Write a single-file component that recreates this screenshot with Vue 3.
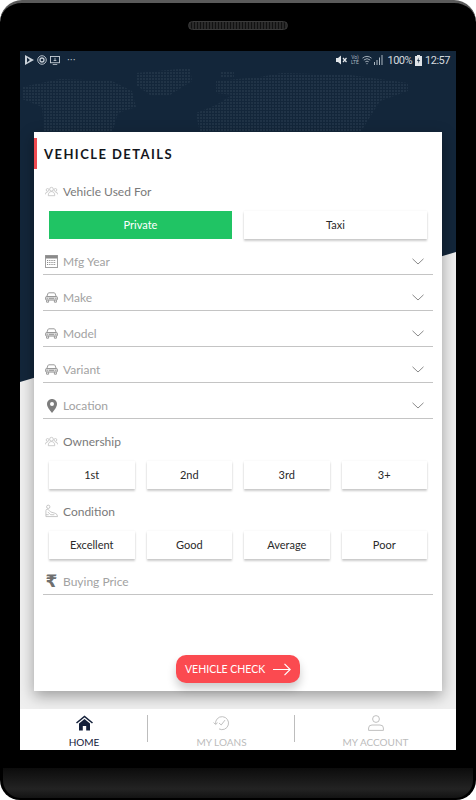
<template>
  <div class="device">
    <div class="bezel-top">
      <div class="speaker"></div>
    </div>

    <div class="screen">
      <div class="backdrop">
        <svg class="world" width="436" height="340" viewBox="0 0 436 340">
          <defs>
            <pattern id="dots" width="3" height="3" patternUnits="userSpaceOnUse">
              <rect width="2" height="2" fill="#34475a" />
            </pattern>
          </defs>
          <g fill="url(#dots)" opacity="0.4">
            <path d="M2 36 L40 28 L92 30 L112 40 L116 56 L98 62 L92 82 L60 82 L24 80 L22 56 L2 48 Z" />
            <path d="M116 22 L170 17 L172 30 L150 44 L130 44 L116 34 Z" />
            <path d="M196 30 L240 26 L262 22 L330 24 L388 32 L388 40 L360 50 L350 66 L340 82 L180 82 L176 62 L196 54 L212 44 L196 42 Z" />
            <path d="M200 20 L214 20 L214 27 L200 27 Z" />
          </g>
        </svg>
      </div>

      <div class="status-bar">
        <div class="status-left">
          <svg width="9" height="10" viewBox="0 0 9 10"><path d="M0 0 L9 5 L0 10 Z M2 2.5 V7.5 L5 5 Z" fill="#c8d0d8" fill-rule="evenodd" /></svg>
          <svg width="10" height="10" viewBox="0 0 11 11" fill="none" stroke="#c8d0d8"><circle cx="5.5" cy="5.5" r="4.7" /><circle cx="5.5" cy="5.5" r="2.2" stroke-width="1.4" /></svg>
          <svg width="10" height="9" viewBox="0 0 11 10" fill="none" stroke="#c8d0d8"><rect x="0.5" y="0.5" width="10" height="7" /><path d="M3 9.5 H8 M5.5 2 V5 M4 5 H7" stroke-width="0.9" /></svg>
          <span class="status-dots">···</span>
        </div>
        <div class="status-right">
          <svg width="11" height="10" viewBox="0 0 11 10"><path d="M0 3 H2 L5 0.5 V9.5 L2 7 H0 Z" fill="#e2e6ea" /><path d="M7 3 L10.5 7 M10.5 3 L7 7" stroke="#e2e6ea" stroke-width="1.2" /></svg>
          <span class="volte">Vo)<br />LTE</span>
          <svg width="10" height="10" viewBox="0 0 11 10" fill="none" stroke="#aeb8c2"><path d="M0.5 3 Q5.5 -1 10.5 3 M2 5 Q5.5 2 9 5 M3.6 7 Q5.5 5.5 7.4 7" /><path d="M5.5 10 L4.5 8.5 H6.5 Z" fill="#aeb8c2" stroke="none" /></svg>
          <svg class="signal" width="9" height="10" viewBox="0 0 9 10" fill="#aeb8c2"><rect x="0" y="7" width="1" height="3" /><rect x="2.5" y="5" width="1" height="5" /><rect x="5" y="2.5" width="1" height="7.5" /><rect x="7.5" y="0" width="1" height="10" /></svg>
          <span class="status-text">100%</span>
          <svg width="7" height="11" viewBox="0 0 7 11"><path d="M2 0 H5 V1 H7 V11 H0 V1 H2 Z" fill="#dfe3e8" /><path d="M3.8 2.5 L2 6 H3.4 L3 8.5 L5 5 H3.6 Z" fill="#1c3044" /></svg>
          <span class="status-text">12:57</span>
        </div>
      </div>

      <main class="content">
        <section class="card">
          <h1 class="card-title">VEHICLE DETAILS</h1>

          <div class="label-row">
            <svg class="icon" width="14" height="11" viewBox="0 0 14 11" fill="none" stroke="#bdbdbd" stroke-width="0.8">
              <circle cx="7" cy="3" r="2" /><path d="M3.5 10 Q3.5 5.6 7 5.6 Q10.5 5.6 10.5 10 Z" />
              <circle cx="2.8" cy="3.8" r="1.5" /><path d="M0.4 8.6 Q0.4 6 2.9 6" />
              <circle cx="11.2" cy="3.8" r="1.5" /><path d="M13.6 8.6 Q13.6 6 11.1 6" />
            </svg>
            <span class="label">Vehicle Used For</span>
          </div>
          <div class="options two">
            <div class="option active">Private</div>
            <div class="option">Taxi</div>
          </div>

          <div v-for="f in selectFields" :key="f.label" class="field">
            <svg v-if="f.icon === 'calendar'" class="icon" width="13" height="13" viewBox="0 0 13 13">
              <rect x="0.5" y="0.5" width="12" height="12" fill="#fff" stroke="#a0a0a0" />
              <rect x="0.5" y="0.5" width="12" height="3" fill="#8a8a8a" />
              <path d="M2 5.5 H11 M2 7.5 H11 M2 9.5 H11" stroke="#8a8a8a" stroke-width="1" stroke-dasharray="1.2 1" />
            </svg>
            <svg v-else-if="f.icon === 'car'" class="icon" width="13" height="11" viewBox="0 0 13 11" fill="none" stroke="#8f8f8f" stroke-width="0.9">
              <path d="M1.8 4.5 L3 1.4 Q3.2 0.8 4 0.8 H9 Q9.8 0.8 10 1.4 L11.2 4.5" />
              <rect x="0.6" y="4.5" width="11.8" height="3.6" rx="1" fill="#dcdcdc" />
              <path d="M4 6.3 H9 M1.8 6.3 H2.8 M10.2 6.3 H11.2" />
              <path d="M1.6 8.2 V10.2 H3.6 V8.2 M9.4 8.2 V10.2 H11.4 V8.2" />
            </svg>
            <svg v-else class="icon pin" width="10" height="14" viewBox="0 0 10 14">
              <path d="M5 0 C2.2 0 0 2.2 0 5 C0 8.5 5 14 5 14 C5 14 10 8.5 10 5 C10 2.2 7.8 0 5 0 Z" fill="#7d7d7d" />
              <circle cx="5" cy="5" r="2" fill="#fff" />
            </svg>
            <span class="placeholder">{{ f.label }}</span>
            <svg class="chevron" width="12" height="7" viewBox="0 0 12 7" fill="none" stroke="#8a8a8a"><path d="M0.5 0.8 L6 6 L11.5 0.8" /></svg>
          </div>

          <div class="label-row">
            <svg class="icon" width="14" height="11" viewBox="0 0 14 11" fill="none" stroke="#bdbdbd" stroke-width="0.8">
              <circle cx="7" cy="3" r="2" /><path d="M3.5 10 Q3.5 5.6 7 5.6 Q10.5 5.6 10.5 10 Z" />
              <circle cx="2.8" cy="3.8" r="1.5" /><path d="M0.4 8.6 Q0.4 6 2.9 6" />
              <circle cx="11.2" cy="3.8" r="1.5" /><path d="M13.6 8.6 Q13.6 6 11.1 6" />
            </svg>
            <span class="label">Ownership</span>
          </div>
          <div class="options four">
            <div v-for="o in ownership" :key="o" class="option">{{ o }}</div>
          </div>

          <div class="label-row">
            <svg class="icon" width="13" height="14" viewBox="0 0 14 14" fill="none" stroke="#b5b5b5" stroke-width="0.8">
              <circle cx="3.5" cy="2.5" r="1.8" />
              <path d="M1 13 V6.5 Q1 5 3 5 L6 8 L11 9.5 Q13.5 10.3 13.5 13 Z" />
              <path d="M3 8 L6 11 H10 M1 11 H4" />
            </svg>
            <span class="label">Condition</span>
          </div>
          <div class="options four">
            <div v-for="c in conditions" :key="c" class="option">{{ c }}</div>
          </div>

          <div class="field">
            <span class="icon rupee">₹</span>
            <span class="placeholder">Buying Price</span>
          </div>

          <button class="cta">
            <span>VEHICLE CHECK</span>
            <svg width="18" height="13" viewBox="0 0 18 13" fill="none" stroke="#fff" stroke-width="1.2"><path d="M0 6.5 H17 M11.5 0.8 L17.2 6.5 L11.5 12.2" /></svg>
          </button>
        </section>
      </main>

      <nav class="tabs">
        <div class="tab current">
          <svg width="17" height="15" viewBox="0 0 17 15">
            <path d="M0.5 7.5 L8.5 1 L16.5 7.5" fill="none" stroke="#14203a" stroke-width="1.6" />
            <path d="M3 8 L8.5 3.6 L14 8 V15 H10.2 V10.5 H6.8 V15 H3 Z" fill="#14203a" />
          </svg>
          <span>HOME</span>
        </div>
        <div class="tab">
          <svg width="17" height="15" viewBox="0 0 17 15" fill="none" stroke="#b9b9b9" stroke-width="0.9">
            <path d="M2.6 8.5 A6.5 6.5 0 1 1 6 13.4" />
            <path d="M0.6 7 L2.6 9 L4.6 7.2 M6 7.5 L8.2 9.5 L12 4.6" />
          </svg>
          <span>MY LOANS</span>
        </div>
        <div class="tab">
          <svg width="16" height="16" viewBox="0 0 16 16" fill="none" stroke="#b9b9b9" stroke-width="0.9">
            <circle cx="8" cy="4" r="3.4" />
            <path d="M0.6 15.4 V13 Q0.6 10 4 10 H12 Q15.4 10 15.4 13 V15.4 Z" />
          </svg>
          <span>MY ACCOUNT</span>
        </div>
      </nav>
    </div>

    <div class="chin">
      <div class="chin-bar"></div>
    </div>
  </div>
</template>

<script setup>
const selectFields = [
  { label: 'Mfg Year', icon: 'calendar' },
  { label: 'Make', icon: 'car' },
  { label: 'Model', icon: 'car' },
  { label: 'Variant', icon: 'car' },
  { label: 'Location', icon: 'pin' }
]

const ownership = ['1st', '2nd', '3rd', '3+']
const conditions = ['Excellent', 'Good', 'Average', 'Poor']
</script>

<style>
html,
body {
  margin: 0;
  background: #fff;
}
</style>

<style scoped>
.device {
  width: 476px;
  height: 800px;
  display: flex;
  flex-direction: column;
  background: #000;
  border-radius: 22px 22px 20px 20px;
  border-top: 3px solid #5a5a5a;
  box-sizing: border-box;
  overflow: hidden;
  font-family: Lato, "Open Sans", sans-serif;
}

.bezel-top {
  height: 48px;
  flex-shrink: 0;
  display: flex;
  justify-content: center;
  padding-top: 18px;
  box-sizing: border-box;
}

.speaker {
  width: 100px;
  height: 9px;
  border-radius: 5px;
  border: 1px solid #3a3a3a;
  box-sizing: border-box;
  background: repeating-linear-gradient(90deg, #2a2a2a 0 2px, #111 2px 3px);
}

.screen {
  position: relative;
  height: 699px;
  margin: 0 20px;
  flex-shrink: 0;
  display: flex;
  flex-direction: column;
  background: #efefef;
}

.backdrop {
  position: absolute;
  inset: 0;
  background: #13263a;
  clip-path: polygon(0 0, 100% 0, 100% 201px, 0 331px);
}

.world {
  display: block;
}

.status-bar {
  position: relative;
  height: 18px;
  flex-shrink: 0;
  display: flex;
  align-items: center;
  justify-content: space-between;
  padding: 0 6px 0 5px;
}

.status-left,
.status-right {
  display: flex;
  align-items: center;
}

.status-left {
  gap: 3px;
}

.status-right {
  gap: 3px;
}

.status-dots {
  margin-left: 4px;
  color: #c8d0d8;
  font: 11px Roboto, sans-serif;
}

.volte {
  font: 5px/5px Roboto, sans-serif;
  color: #aeb8c2;
  width: 9px;
  text-align: center;
}

.signal {
  margin-left: -1px;
  margin-right: 1px;
}

.status-text {
  font: 11px Roboto, sans-serif;
  letter-spacing: -0.5px;
  color: #d5dade;
}

.content {
  position: relative;
  flex: 1;
  min-height: 0;
  display: flex;
  padding: 63px 14px 18px;
}

.card {
  flex: 1;
  display: flex;
  flex-direction: column;
  background: #fff;
  box-shadow: 0 5px 14px rgba(0, 0, 0, 0.35);
}

.card-title {
  margin: 6px 0 0;
  height: 31px;
  box-sizing: border-box;
  border-left: 3px solid #ef4a50;
  padding-left: 7px;
  font-size: 13px;
  font-weight: 700;
  line-height: 32px;
  letter-spacing: 1.45px;
  color: #14161c;
}

.label-row {
  display: flex;
  align-items: center;
  height: 24px;
  margin: 10px 9px 0;
}

.icon {
  flex-shrink: 0;
  width: 13px;
  margin-left: 2px;
  margin-right: 5px;
}

.pin {
  width: 10px;
  margin-left: 4px;
  margin-right: 6px;
}

.rupee {
  width: 13px;
  font: bold 17px/19px "DejaVu Sans", sans-serif;
  color: #6f6f6f;
  text-align: center;
}

.label {
  font-size: 12px;
  color: #7a7a7a;
}

.options {
  display: grid;
  gap: 12px;
  margin: 8px 15px 0;
}

.options.two {
  grid-template-columns: 1fr 1fr;
}

.options.four {
  grid-template-columns: repeat(4, 1fr);
}

.option {
  height: 28px;
  line-height: 28px;
  text-align: center;
  font-size: 11px;
  color: #2a2a2a;
  background: #fff;
  box-shadow: 0 2px 2px rgba(0, 0, 0, 0.2), 0 0 2px rgba(0, 0, 0, 0.06);
}

.option.active {
  background: #20c464;
  color: #fff;
  box-shadow: none;
}

.field {
  display: flex;
  align-items: center;
  height: 36px;
  box-sizing: border-box;
  margin: 0 9px;
  padding: 13px 0 3px;
  border-bottom: 1px solid #c4c4c4;
}

.placeholder {
  flex: 1;
  font-size: 12px;
  color: #a2a2a2;
}

.chevron {
  margin-right: 9px;
}

.cta {
  align-self: center;
  margin: auto 0 8px;
  width: 124px;
  height: 28px;
  padding: 0 9px;
  display: flex;
  align-items: center;
  justify-content: space-between;
  border: none;
  border-radius: 10px;
  background: #fb4a50;
  color: #fff;
  font-family: inherit;
  font-size: 10.5px;
  box-shadow: 0 6px 10px rgba(0, 0, 0, 0.2);
}

.tabs {
  position: relative;
  height: 41px;
  flex-shrink: 0;
  display: grid;
  grid-template-columns: 128px 147px 1fr;
  background: #fff;
  overflow: hidden;
}

.tab {
  position: relative;
  display: flex;
  flex-direction: column;
  align-items: center;
  padding-top: 6px;
  box-sizing: border-box;
  font-size: 10px;
  color: #bcbcbc;
}

.tab svg {
  height: 16px;
  margin-bottom: 5px;
}

.tab span {
  line-height: 13px;
}

.tab.current {
  color: #14203a;
}

.tab + .tab::before {
  content: "";
  position: absolute;
  left: -1px;
  top: 6px;
  height: 27px;
  border-left: 1px solid #bdbdbd;
}

.chin {
  flex: 1;
  padding-top: 18px;
}

.chin-bar {
  height: 30px;
  margin: 0 3px;
  border-radius: 0 0 18px 18px;
  background: linear-gradient(180deg, #0c0c0c 0%, #232323 70%, #131313 100%);
}
</style>
